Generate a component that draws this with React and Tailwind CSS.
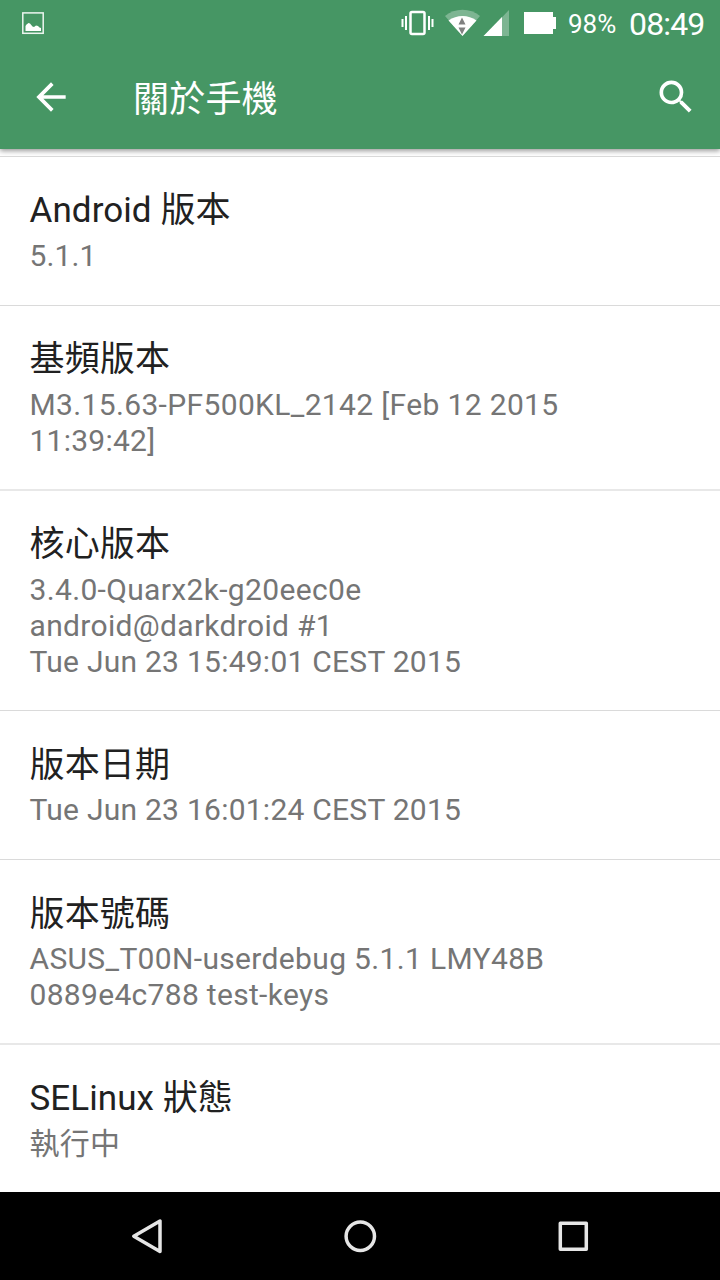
const items = [
  { title: "Android 版本", style: "h-[149px] border-t border-[#dadada] pt-[32px]", gap: "mt-[5px]", tracking: "tracking-[0.08px]", lines: [["5.1.1", "tracking-[0.1px]"]] },
  { title: "基頻版本", style: "h-[184px] border-t border-[#dadada] pt-[32px]", gap: "mt-[5px]", tracking: "tracking-[0.15px]", lines: [["M3.15.63-PF500KL_2142 [Feb 12 2015", "tracking-[0.35px]"], ["11:39:42]", "tracking-[0.25px]"]] },
  { title: "核心版本", style: "h-[221px] border-t-2 border-[#e8e8e8] pt-[32px]", gap: "mt-[5px]", tracking: "tracking-[0.15px]", lines: [["3.4.0-Quarx2k-g20eec0e", "tracking-[0.34px]"], ["android@darkdroid #1", "tracking-[0.32px]"], ["Tue Jun 23 15:49:01 CEST 2015", "tracking-[0.25px]"]] },
  { title: "版本日期", style: "h-[149px] border-t border-[#dadada] pt-[33px]", gap: "mt-[4px]", tracking: "tracking-[0.15px]", lines: [["Tue Jun 23 16:01:24 CEST 2015", "tracking-[0.25px]"]] },
  { title: "版本號碼", style: "h-[184px] border-t border-[#dadada] pt-[33px]", gap: "mt-[4px]", tracking: "tracking-[0.15px]", lines: [["ASUS_T00N-userdebug 5.1.1 LMY48B", "tracking-[0.34px]"], ["0889e4c788 test-keys", "tracking-[0.31px]"]] },
  { title: "SELinux 狀態", style: "h-[148px] border-t-2 border-[#e8e8e8] pt-[32px]", gap: "mt-[5px]", tracking: "tracking-[0.06px]", lines: [["執行中", "tracking-[0.3px]"]] },
];

function StatusBar() {
  return (
    <div className="flex h-[50px] items-start text-white">
      <svg className="h-[50px] w-[60px]" viewBox="0 0 60 50" fill="none">
        <rect x="22.800" y="12.900" width="20.400" height="20.400" stroke="#fff" strokeOpacity=".9" strokeWidth="1.500" />
        <path d="M25.500 31v-5l1-1.500 2-1.500 1.500.5 2.500 3 1.500.5 2-1.500 2 .5 1.500 1.500 1.500.5V31z" fill="#fff" />
      </svg>
      <svg className="ml-auto h-[50px] w-[170px]" viewBox="390 0 170 50" fill="none">
        <rect x="410.500" y="12" width="14" height="22" rx="1.500" stroke="#fff" strokeWidth="2.500" />
        <path d="M402.500 19v8M406 16v14M429 16v14M432.500 19v8" stroke="#fff" strokeWidth="2" />
        <path d="M445 16a28 28 0 0 1 35 0L462.500 36z" fill="#fff" fillOpacity=".3" />
        <path d="M448.500 20.500a24 24 0 0 1 28 0L462.500 36z" fill="#fff" />
        <path d="M462 17.500l3.500 7h-7zM458.500 27.500h7l-3.500 7z" fill="#808080" />
        <path d="M509 10v26h-25z" fill="#fff" fillOpacity=".3" />
        <path d="M502 17v19h-18.500z" fill="#fff" />
        <path d="M524 12h29v5h3v12h-3v5h-29z" fill="#fff" />
      </svg>
      <span className="mt-[6px] ml-2 w-[61px] text-[26px] leading-9">98%</span>
      <span className="mt-[6px] w-[91px] text-[32px] leading-9 tracking-[-0.85px]">08:49</span>
    </div>
  );
}

export default function App() {
  return (
    <main className="flex h-[1280px] w-[720px] flex-col overflow-hidden bg-white font-['Roboto','Noto_Sans_CJK_TC',sans-serif]">
      <header className="z-10 h-[149px] shrink-0 bg-[#469664] shadow-[0_2px_5px_rgba(0,0,0,.4)]">
        <StatusBar />
        <div className="flex h-[94px] items-center text-white">
          <svg className="ml-[29px] size-[44px]" viewBox="0 0 24 24" fill="#fff"><path d="M20 11H7.830l5.590-5.590L12 4l-8 8 8 8 1.410-1.410L7.830 13H20z" /></svg>
          <h1 className="ml-[60px] pt-[5px] text-[36px] leading-10 tracking-[0.2px]">關於手機</h1>
          <svg className="mr-[22px] ml-auto size-[44px]" viewBox="0 0 24 24" fill="#fff"><path d="M15.500 14h-.79l-.28-.27A6.470 6.470 0 0 0 16 9.500 6.500 6.500 0 1 0 9.500 16c1.610 0 3.090-.59 4.230-1.570l.27.28v.79l5 4.990L20.490 19zm-6 0C7.010 14 5 11.990 5 9.500S7.010 5 9.500 5 14 7.010 14 9.500 11.990 14 9.500 14z" /></svg>
        </div>
      </header>
      <ul className="mt-[7px] flex-1 overflow-hidden">
        {items.map((item) => (
          <li key={item.title} className={`px-[29.500px] ${item.style}`}>
            <h2 className={`text-[35px] leading-[44px] text-[#212121] ${item.tracking}`}>{item.title}</h2>
            <div className={`text-[30px] leading-9 text-[#757575] ${item.gap}`}>
              {item.lines.map(([line, tracking]) => <p key={line} className={`whitespace-nowrap ${tracking}`}>{line}</p>)}
            </div>
          </li>
        ))}
      </ul>
      <nav className="h-[88px] shrink-0 bg-black">
        <svg className="h-[88px] w-[720px]" viewBox="0 1192 720 88" fill="none" stroke="#e6e6e6" strokeWidth="3.500" strokeLinejoin="round">
          <path d="M160 1221v30.500l-26.200-15.300z" />
          <circle cx="360.300" cy="1236.300" r="14.200" />
          <rect x="560.300" y="1223.300" width="26" height="26" />
        </svg>
      </nav>
    </main>
  );
}
